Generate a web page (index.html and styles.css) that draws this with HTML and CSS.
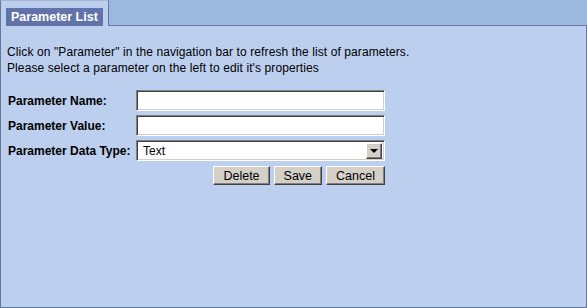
FILE: index.html
```html
<!DOCTYPE html>
<html lang="en">
<head>
    <meta charset="UTF-8" />
    <title>Parameter List</title>
    <link rel="stylesheet" href="styles.css">
</head>
<body>
    <div class="panel">
        <div class="tabbar">
            <div class="tab"><span class="tab-label">Parameter List</span></div>
            <div class="tab-fill"></div>
        </div>
        <div class="content">
            <p class="intro">Click on "Parameter" in the navigation bar to refresh the list of parameters.<br>
            Please select a parameter on the left to edit it's properties</p>

            <div class="form">
                <label class="field-label" for="paramName">Parameter Name:</label>
                <input class="field" id="paramName" type="text">

                <label class="field-label" for="paramValue">Parameter Value:</label>
                <input class="field" id="paramValue" type="text">

                <label class="field-label">Parameter Data Type:</label>
                <div class="select">
                    <span class="select-text">Text</span>
                    <span class="select-arrow"></span>
                </div>

                <div class="buttons">
                    <button class="btn">Delete</button>
                    <button class="btn">Save</button>
                    <button class="btn">Cancel</button>
                </div>
            </div>
        </div>
    </div>
</body>
</html>
```

FILE: styles.css
```css
body {
    margin: 0;
    padding: 0;
    font-family: "Liberation Sans", Arial, sans-serif;
    font-size: 12px;
    background-color: #bccfee;
}
.panel {
    width: 587px;
    height: 308px;
    display: flex;
    flex-direction: column;
}
.tabbar {
    display: flex;
    height: 26px;
    background-color: #9db8de;
}
.tab {
    width: 109px;
    background-color: #bccfee;
    border-left: 1px solid #63789a;
    border-top: 1px solid #a7b6cc;
    border-right: 1px solid #63789a;
    padding: 7px 5px 0 5px;
    box-sizing: border-box;
}
.tab-label {
    display: block;
    height: 18px;
    line-height: 18px;
    background-color: #6273a9;
    color: #fff;
    font-weight: bold;
    font-size: 12.5px;
    padding-left: 5px;
}
.tab-fill {
    flex: 1;
    border-bottom: 1px solid #63789a;
}
.content {
    flex: 1;
    background-color: #bccfee;
    border-left: 1px solid #63789a;
    border-right: 1px solid #63789a;
    border-bottom: 1px solid #63789a;
    padding: 18px 6px 0 6px;
}
.intro {
    margin: 0;
    line-height: 16px;
    letter-spacing: 0.1px;
    color: #000;
}
.form {
    display: grid;
    grid-template-columns: 127px 249px;
    column-gap: 1px;
    row-gap: 4px;
    margin-top: 14px;
    padding-left: 1px;
    align-items: center;
}
.field-label {
    font-weight: bold;
    color: #000;
}
.field, .select {
    height: 21px;
    box-sizing: border-box;
    border-top: 1px solid #808080;
    border-left: 1px solid #808080;
    border-bottom: 1px solid #fff;
    border-right: 1px solid #fff;
    box-shadow: inset 1px 1px 0 #404040, inset -1px -1px 0 #d4d0c8;
    background-color: #fff;
    margin: 0;
    padding: 0 4px;
    font-family: inherit;
    font-size: 12px;
    outline: none;
}
.select {
    display: flex;
    align-items: center;
    padding: 2px 2px 2px 6px;
}
.select-text {
    flex: 1;
}
.select-arrow {
    width: 16px;
    height: 16px;
    box-sizing: border-box;
    background-color: #d4d0c8;
    border-top: 1px solid #fff;
    border-left: 1px solid #fff;
    border-right: 1px solid #404040;
    border-bottom: 1px solid #404040;
    box-shadow: inset -1px -1px 0 #808080;
    position: relative;
}
.select-arrow::after {
    content: "";
    position: absolute;
    left: 3px;
    top: 5px;
    border-left: 4px solid transparent;
    border-right: 4px solid transparent;
    border-top: 4px solid #000;
}
.buttons {
    grid-column: 2;
    display: flex;
    justify-content: flex-end;
    gap: 4px;
    margin-top: 1px;
}
.btn {
    height: 19px;
    box-sizing: border-box;
    background-color: #d4d0c8;
    border-top: 1px solid #fff;
    border-left: 1px solid #fff;
    border-right: 1px solid #404040;
    border-bottom: 1px solid #404040;
    box-shadow: inset -1px -1px 0 #808080;
    font-family: inherit;
    font-size: 12.5px;
    color: #000;
    padding: 0 9px;
    margin: 0;
    cursor: pointer;
}
```
